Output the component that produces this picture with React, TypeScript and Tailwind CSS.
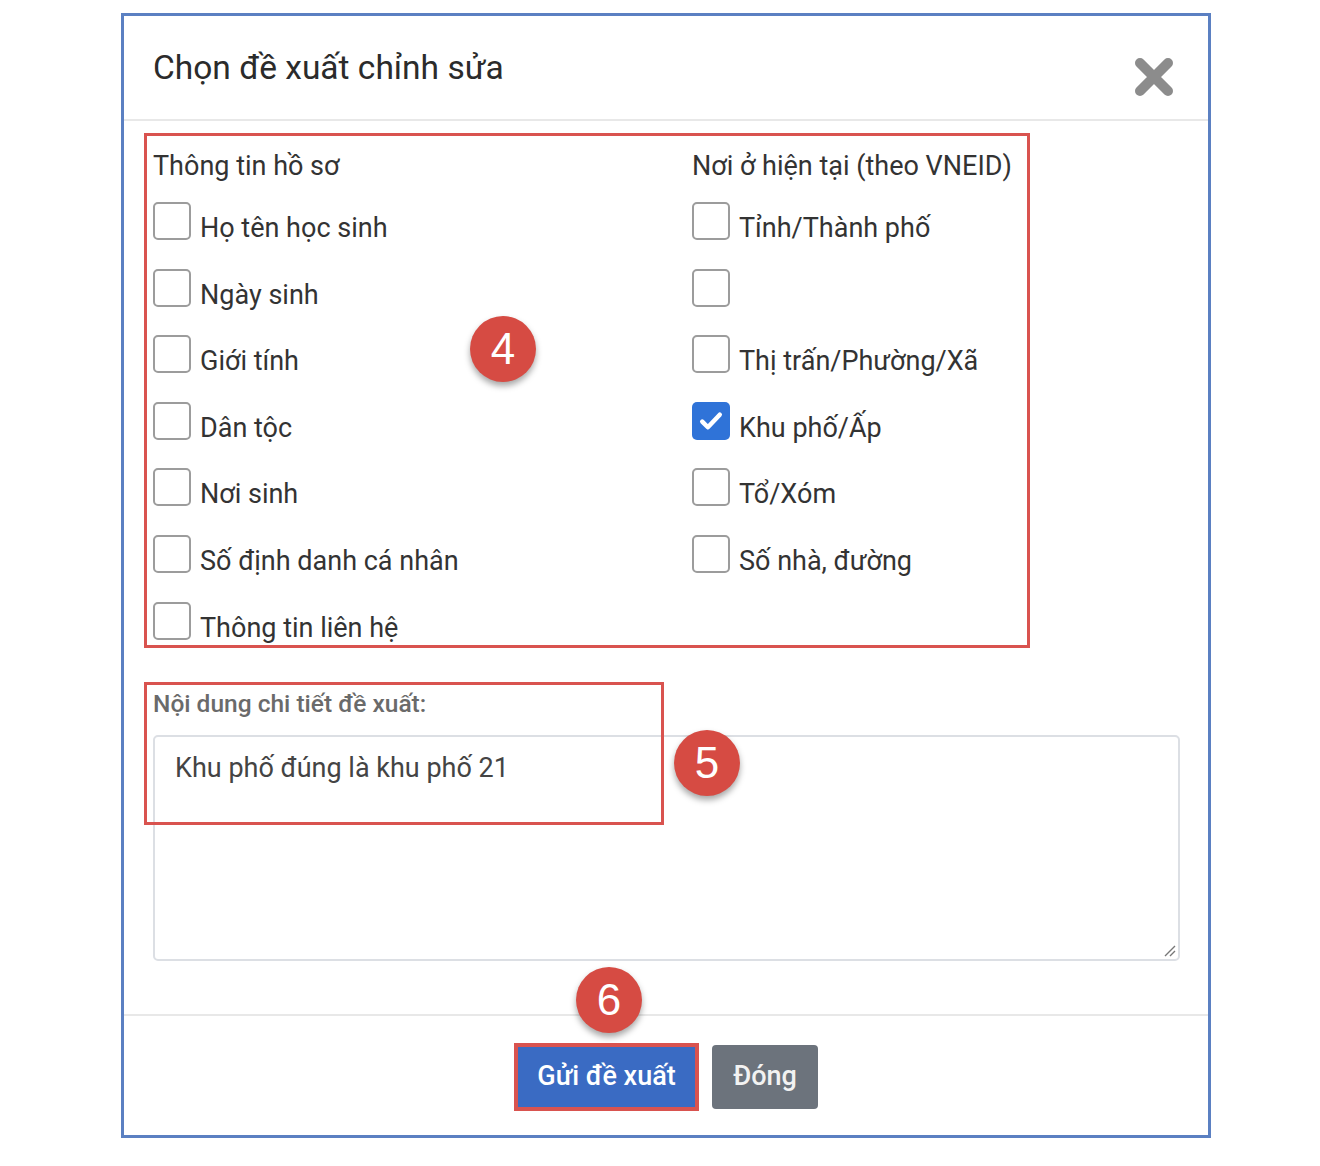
import React from "react";

const left = ["Họ tên học sinh", "Ngày sinh", "Giới tính", "Dân tộc", "Nơi sinh", "Số định danh cá nhân", "Thông tin liên hệ"];
const right = [
	{ label: "Tỉnh/Thành phố", checked: false },
	{ label: "", checked: false },
	{ label: "Thị trấn/Phường/Xã", checked: false },
	{ label: "Khu phố/Ấp", checked: true },
	{ label: "Tổ/Xóm", checked: false },
	{ label: "Số nhà, đường", checked: false },
];

function Box({ checked }: { checked?: boolean }) {
	if (checked) {
		return (
			<span className="flex size-[38px] shrink-0 items-center justify-center rounded-[5px] bg-[#2f73d8]">
				<svg viewBox="0 0 24 24" className="size-[30px]" fill="none" stroke="#fff" strokeWidth={3.6} strokeLinecap="round" strokeLinejoin="round">
					<path d="M5 12.5l4.5 4.5L19 7" />
				</svg>
			</span>
		);
	}
	return <span className="size-[38px] shrink-0 rounded-[5px] border-2 border-[#9c9c9c] bg-white" />;
}

function Row({ label, checked }: { label: string; checked?: boolean }) {
	return (
		<div className="flex h-[38px] items-end gap-[9px]">
			<Box checked={checked} />
			<span className="translate-y-[3px] text-[27px] leading-[30px] text-[#333]">{label}</span>
		</div>
	);
}

function Badge({ n, className }: { n: string; className: string }) {
	return (
		<div
			className={`absolute flex size-[66px] items-center justify-center rounded-full bg-[#d64b43] shadow-[0_4px_6px_rgba(0,0,0,0.35)] ${className}`}
		>
			<span className="text-[44px] leading-none text-white" style={{ fontFamily: '"Liberation Sans", Arial, sans-serif' }}>
				{n}
			</span>
		</div>
	);
}

export default function App() {
	return (
		<div className="min-h-[1166px] bg-white pl-[121px] pt-[13px]" style={{ fontFamily: 'Roboto, "Noto Sans", sans-serif' }}>
			<div className="relative flex h-[1125px] w-[1090px] flex-col border-[3px] border-[#5b80c2] bg-white">
				<div className="flex h-[105px] items-center justify-between border-b-2 border-[#e8e8e8] pl-[29px] pr-[34px]">
					<h2 className="text-[33.5px] leading-none text-[#2b2b2b]">Chọn đề xuất chỉnh sửa</h2>
					<svg viewBox="0 0 40 40" className="mt-[18px] size-[40px]" fill="none" stroke="#8c8c8c" strokeWidth={10} strokeLinecap="round">
						<path d="M6 6l28 28M34 6L6 34" />
					</svg>
				</div>

				<div className="ml-[20px] mt-[12px] h-[515px] w-[886px] border-[3px] border-[#d9534f] pl-[6px] pt-[7px]">
					<div className="grid grid-cols-[539px_1fr]">
						<div className="flex flex-col">
							<div className="mb-[19px] h-[40px] pt-[3px] text-[27px] leading-[40px] text-[#333]">Thông tin hồ sơ</div>
							<div className="flex flex-col gap-[28.6px]">
								{left.map((l) => (
									<Row key={l} label={l} />
								))}
							</div>
						</div>
						<div className="flex flex-col">
							<div className="mb-[19px] h-[40px] pt-[3px] text-[27px] leading-[40px] text-[#333]">Nơi ở hiện tại (theo VNEID)</div>
							<div className="flex flex-col gap-[28.6px]">
								{right.map((r, i) => (
									<Row key={i} label={r.label} checked={r.checked} />
								))}
							</div>
						</div>
					</div>
				</div>

				<div className="ml-[29px] mt-[44px] text-[24.5px] font-medium leading-[24px] text-[#6a6a6a]">Nội dung chi tiết đề xuất:</div>
				<div className="relative ml-[29px] mt-[19px] h-[226px] w-[1027px] rounded-[5px] border-2 border-[#dcdfe4] px-[20px] pt-[15px] text-[27px] leading-[32px] text-[#444]">
					Khu phố đúng là khu phố 21
					<svg viewBox="0 0 14 14" className="absolute bottom-[2px] right-[2px] size-[14px]" stroke="#777" strokeWidth={1.4}>
						<path d="M13 3L3 13M13 8L8 13" />
					</svg>
				</div>

				<div className="mt-[53px] flex flex-1 items-center justify-center gap-[13px] border-t-2 border-[#e8e8e8] pt-[2px]">
					<div className="border-4 border-[#d9534f]">
						<button className="h-[60px] w-[177px] bg-[#3a6bc3] text-[27px] font-medium text-white">Gửi đề xuất</button>
					</div>
					<button className="h-[64px] w-[106px] rounded-[4px] bg-[#6c737c] text-[27px] font-medium text-[#f2f2f2]">Đóng</button>
				</div>

				<div className="pointer-events-none absolute left-[20px] top-[666px] h-[143px] w-[520px] border-[3px] border-[#d9534f]" />
				<Badge n="4" className="left-[346px] top-[300px]" />
				<Badge n="5" className="left-[550px] top-[714px]" />
				<Badge n="6" className="left-[452px] top-[951px]" />
			</div>
		</div>
	);
}
